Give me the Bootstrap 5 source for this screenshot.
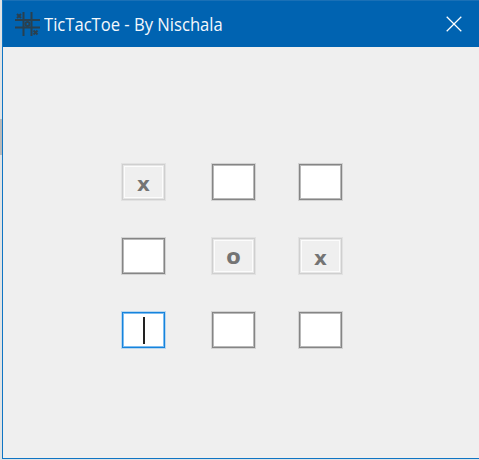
<!DOCTYPE html>
<html lang="en">
<head>
<meta charset="utf-8">
<title>TicTacToe - By Nischala</title>
<link rel="stylesheet" href="https://cdn.jsdelivr.net/npm/bootstrap@5.3.0/dist/css/bootstrap.min.css">
<style>
html,body{height:100%;overflow:hidden}
body{background:#e1e3e4;padding:0 0 1px;display:flex;font-family:"Open Sans","Noto Sans",sans-serif}
.desk-edge{width:2px;background:linear-gradient(#e1e3e4 119px,#b9b9b9 119px 155px,#e1e3e4 155px)}
.app-window{background:#efefef;border-left:1px solid #0f75c4;border-bottom:1px solid #0f75c4}
.title-bar{height:47px;background:#0063b1;border-top:1px solid #1a70b6;padding:0 17px 0 12px}
.title-text{font-family:"Open Sans","Noto Sans",sans-serif;font-size:18px;line-height:24px;color:#f4f8fc;margin-left:4px;transform:scaleX(.922);transform-origin:left}
.board{display:grid;grid-template-columns:90px 87px 44px;grid-template-rows:74px 74px 36px;padding:117px 0 0 119px}
.tile{width:43px;height:36px;border:1px solid #858585;background:#fff;box-shadow:0 0 0 1px #d3d3d3,inset 0 0 0 1px #b9b9b9;font-family:"DejaVu Sans",sans-serif;font-weight:700;font-size:20px;line-height:1;color:#747474}
.tile.played{background:#efefef;border-color:#cfcfcf;box-shadow:0 0 0 1px #e2e2e2,inset 0 0 0 1px #e6e6e6,inset 0 0 0 2px #fcfcfc}
.tile.active-cell{border-color:#1583dc;box-shadow:0 0 0 1px #b9d6ee,inset 0 0 0 1px #7dbcf0}
.played span{margin-top:3px}
.played .nought{font-size:21px;margin-top:2px}
.caret{width:2px;height:27px;background:#222}
</style>
<script src="https://cdn.jsdelivr.net/npm/bootstrap@5.3.0/dist/js/bootstrap.bundle.min.js"></script>
</head>
<body>
<div class="desk-edge flex-shrink-0"></div>
<main class="app-window flex-grow-1">
<header class="title-bar d-flex align-items-center">
<svg width="25" height="25" viewBox="0 0 25 25" fill="none" stroke="#29404f"><path d="M8.500 0V24M16.500 0V24M0 8H25M0 15.500H25" stroke-width="2"/><path d="M2 2l4 4m0-4l-4 4M18.500 18.500l4 4m0-4l-4 4" stroke-width="2"/><circle cx="12.500" cy="12" r="2" stroke-width="2"/></svg>
<h1 class="title-text fw-normal mb-0 text-nowrap">TicTacToe - By Nischala</h1>
<svg class="ms-auto" width="16" height="16" viewBox="0 0 16 16" fill="none" stroke="#fff" stroke-width="1.25"><path d="M.7.7l14.600 14.600M15.300.7L.7 15.300"/></svg>
</header>
<section class="board">
<div class="tile played d-flex align-items-center justify-content-center"><span>x</span></div>
<div class="tile"></div>
<div class="tile"></div>
<div class="tile"></div>
<div class="tile played d-flex align-items-center justify-content-center"><span class="nought">o</span></div>
<div class="tile played d-flex align-items-center justify-content-center"><span>x</span></div>
<div class="tile active-cell d-flex align-items-center justify-content-center"><div class="caret"></div></div>
<div class="tile"></div>
<div class="tile"></div>
</section>
</main>
</body>
</html>
